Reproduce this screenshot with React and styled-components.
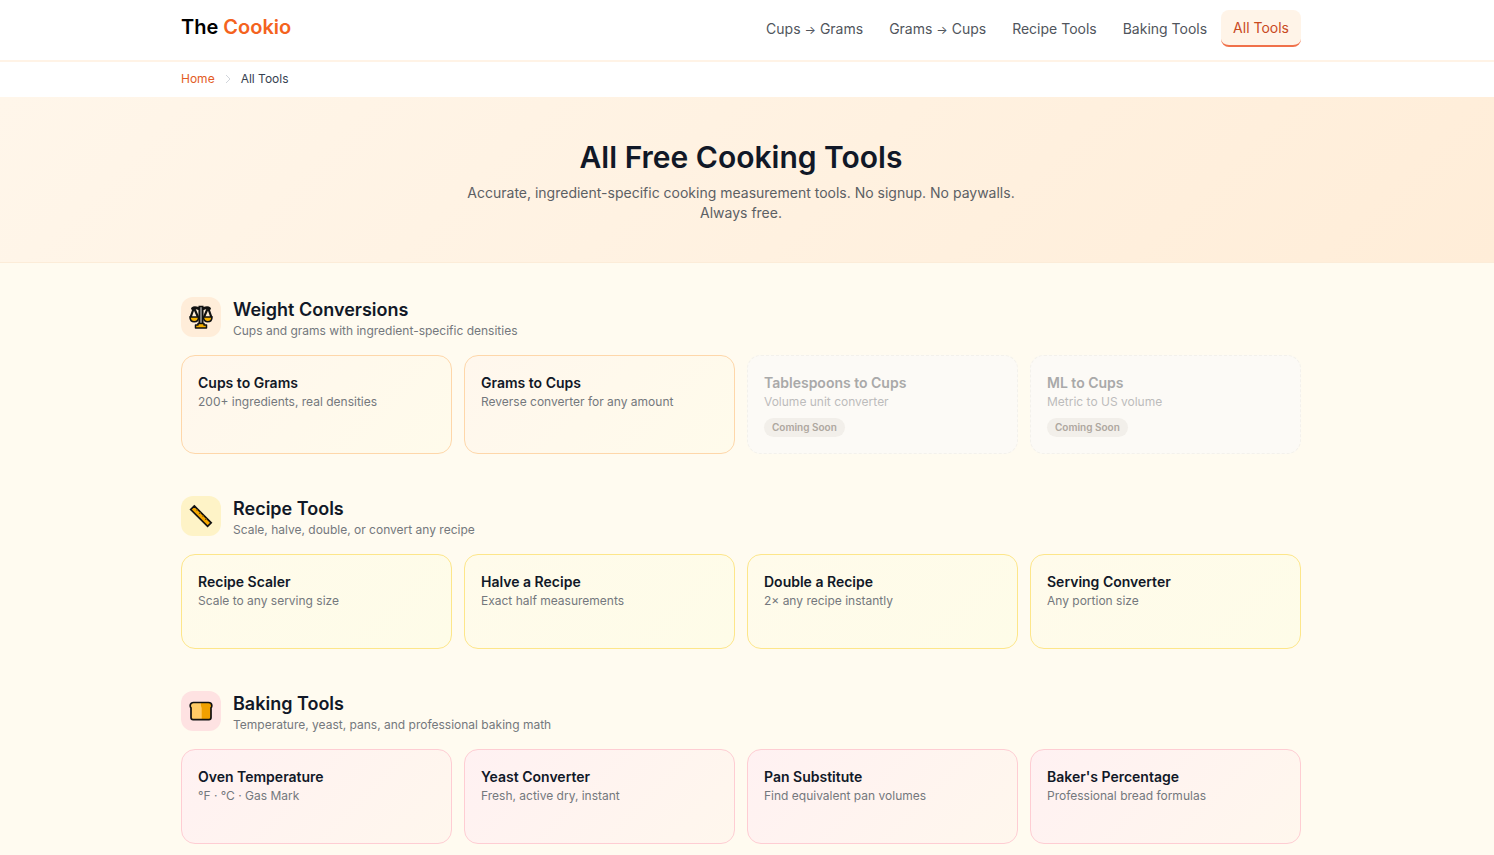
import styled, { createGlobalStyle } from "styled-components";

const navLinks = [
  { label: "Cups to Grams", from: "Cups", to: "Grams" },
  { label: "Grams to Cups", from: "Grams", to: "Cups" },
  { label: "Recipe Tools" },
  { label: "Baking Tools" },
  { label: "All Tools", active: true },
];

const sections = [
  {
    tone: "orange",
    icon: <ScalesIcon />,
    title: "Weight Conversions",
    text: "Cups and grams with ingredient-specific densities",
    tools: [
      { title: "Cups to Grams", text: "200+ ingredients, real densities" },
      { title: "Grams to Cups", text: "Reverse converter for any amount" },
      { title: "Tablespoons to Cups", text: "Volume unit converter", soon: true },
      { title: "ML to Cups", text: "Metric to US volume", soon: true },
    ],
  },
  {
    tone: "yellow",
    icon: <RulerIcon />,
    title: "Recipe Tools",
    text: "Scale, halve, double, or convert any recipe",
    tools: [
      { title: "Recipe Scaler", text: "Scale to any serving size" },
      { title: "Halve a Recipe", text: "Exact half measurements" },
      { title: "Double a Recipe", text: "2× any recipe instantly" },
      { title: "Serving Converter", text: "Any portion size" },
    ],
  },
  {
    tone: "rose",
    icon: <BreadIcon />,
    title: "Baking Tools",
    text: "Temperature, yeast, pans, and professional baking math",
    tools: [
      { title: "Oven Temperature", text: "°F · °C · Gas Mark" },
      { title: "Yeast Converter", text: "Fresh, active dry, instant" },
      { title: "Pan Substitute", text: "Find equivalent pan volumes" },
      { title: "Baker's Percentage", text: "Professional bread formulas" },
    ],
  },
];

const tones = {
  orange: {
    icon: "#ffedd9",
    border: "#fed7aa",
    card: "linear-gradient(135deg, #fff7ed, #fffbeb)",
  },
  yellow: {
    icon: "#fef3c7",
    border: "#fde68a",
    card: "linear-gradient(135deg, #fffbeb, #fefce8)",
  },
  rose: {
    icon: "#fee2e2",
    border: "#fecdd3",
    card: "linear-gradient(135deg, #fff1f2, #fff7ed)",
  },
};

function ScalesIcon() {
  return (
    <svg width="24" height="24" viewBox="0 0 24 24" aria-hidden="true">
      <path
        d="M3.500 3.500c2-1.800 4-.8 6 0h5c2-.8 4-1.800 6 0"
        stroke="#111"
        strokeWidth="2.800"
        strokeLinecap="round"
        fill="none"
      />
      <path
        d="M4.500 4 1.700 12M5.500 4l3.500 8M18.500 4 15 12M19.500 4l2.800 8"
        stroke="#111"
        strokeWidth="2.200"
        fill="none"
      />
      <path
        d="M1 12h8.600c0 3.200-2 4.800-4.300 4.800S1 15.200 1 12zM14.400 12H23c0 3.200-2 4.800-4.300 4.800s-4.300-1.600-4.300-4.800z"
        fill="#f5b000"
        stroke="#111"
        strokeWidth="1.600"
      />
      <path d="M10.300 1.500h3.400v18h-3.400z" fill="#8f8f8f" stroke="#111" strokeWidth="1.700" />
      <path
        d="M9 18.500h6v1.500h2.500v3h-11v-3H9z"
        fill="#f5b000"
        stroke="#111"
        strokeWidth="1.500"
        strokeLinejoin="round"
      />
    </svg>
  );
}

function RulerIcon() {
  return (
    <svg width="24" height="24" viewBox="0 0 24 24" aria-hidden="true">
      <path
        d="M5.300 1.900 22.200 18.800 18.600 22.400 1.700 5.500z"
        fill="#f7a900"
        stroke="#111"
        strokeWidth="1.700"
      />
      <path
        d="m8.700 5.300-1.200 1.200M11.700 8.300l-1.800 1.800M14.700 11.300l-1.200 1.200M17.700 14.300l-1.800 1.800"
        stroke="#6b4a00"
        strokeWidth="0.900"
      />
    </svg>
  );
}

function BreadIcon() {
  const crust =
    "M4.600 3.500h14.800c2 0 3.400 1.400 3.400 3.200 0 1-.3 1.700-.8 2.200v9.600c0 1.300-.8 2.100-2.100 2.100H4.100c-1.300 0-2.100-.8-2.100-2.100V8.900c-.5-.5-.8-1.200-.8-2.200 0-1.800 1.400-3.200 3.400-3.200z";

  return (
    <svg width="24" height="24" viewBox="0 0 24 24" aria-hidden="true">
      <path d={crust} fill="#ffcb66" />
      <path
        d="M12.500 3.500h6.900c2 0 3.400 1.400 3.400 3.200 0 1-.3 1.700-.8 2.200v9.600c0 1.300-.8 2.100-2.100 2.100h-7.200V8.900c-.8-1.700-1.300-3.700-.2-5.400z"
        fill="#f0a000"
      />
      <path d={crust} fill="none" stroke="#111" strokeWidth="1.700" />
    </svg>
  );
}

function App() {
  return (
    <>
      <GlobalStyle />
      <Header>
        <Container className="bar">
          <Logo href="#">
            The <span>Cookio</span>
          </Logo>
          <Nav>
            {navLinks.map((link) => (
              <NavLink key={link.label} href="#" $active={link.active}>
                {link.from ? (
                  <>
                    {link.from} <Arrow>→</Arrow> {link.to}
                  </>
                ) : (
                  link.label
                )}
              </NavLink>
            ))}
          </Nav>
        </Container>
      </Header>

      <Breadcrumb aria-label="Breadcrumb">
        <Container className="crumbs">
          <a href="#">Home</a>
          <svg width="6" height="10" viewBox="0 0 6 10" aria-hidden="true">
            <path d="m1 1 4 4-4 4" fill="none" stroke="#d1d5db" />
          </svg>
          <span>All Tools</span>
        </Container>
      </Breadcrumb>

      <Hero>
        <h1>All Free Cooking Tools</h1>
        <p>
          Accurate, ingredient-specific cooking measurement tools. No signup. No
          paywalls. Always free.
        </p>
      </Hero>

      <Main>
        {sections.map((section) => (
          <Section key={section.title}>
            <SectionHead>
              <IconBox $tone={section.tone}>{section.icon}</IconBox>
              <SectionText>
                <h2>{section.title}</h2>
                <p>{section.text}</p>
              </SectionText>
            </SectionHead>
            <Grid>
              {section.tools.map((tool) =>
                tool.soon ? (
                  <Card as="div" key={tool.title} $tone={section.tone} $soon>
                    <h3>{tool.title}</h3>
                    <p>{tool.text}</p>
                    <Badge>Coming Soon</Badge>
                  </Card>
                ) : (
                  <Card href="#" key={tool.title} $tone={section.tone}>
                    <h3>{tool.title}</h3>
                    <p>{tool.text}</p>
                  </Card>
                )
              )}
            </Grid>
          </Section>
        ))}
      </Main>
    </>
  );
}

export default App;

const GlobalStyle = createGlobalStyle`
  * {
    box-sizing: border-box;
    margin: 0;
    padding: 0;
  }
  body {
    background: #fffbf0;
    color: #111827;
    font-family: Inter, "Open Sans", sans-serif;
  }
  a {
    text-decoration: none;
  }
`;

const Container = styled.div`
  max-width: 1120px;
  margin: 0 auto;

  &.bar {
    display: flex;
    justify-content: space-between;
    align-items: flex-start;
  }
  &.crumbs {
    display: flex;
    align-items: center;
    gap: 10px;
  }
`;

const Header = styled.header`
  background: #fff;
  border-bottom: 2px solid #fff3e6;
  padding: 10px 24px 13px 12px;
`;

const Logo = styled.a`
  font-size: 20px;
  font-weight: 600;
  line-height: 34px;
  color: #000;

  span {
    color: #f4631e;
  }
`;

const Nav = styled.nav`
  display: flex;
  align-items: center;
  gap: 2px;
`;

const NavLink = styled.a`
  padding: 9px 12px 8px;
  border-radius: 8px;
  border-bottom: ${(p) => (p.$active ? "2px solid #f0714a" : "none")};
  background: ${(p) => (p.$active ? "#fff4e8" : "transparent")};
  color: ${(p) => (p.$active ? "#c94a1e" : "#50555c")};
  font-size: 14px;
  font-weight: 400;
  line-height: 18px;
`;

const Arrow = styled.span`
  font-size: 12px;
  line-height: 1;
`;

const Breadcrumb = styled.nav`
  background: #fff;
  padding: 8px 24px 9px 12px;
  font-size: 12px;
  line-height: 18px;

  a {
    color: #e35b25;
  }
  span {
    color: #374151;
  }
`;

const Hero = styled.section`
  padding: 40px 24px 39px 12px;
  border-bottom: 1px solid #fcecd8;
  background: linear-gradient(135deg, #fff6ea 0%, #ffedd8 100%);
  text-align: center;

  h1 {
    font-size: 30px;
    font-weight: 600;
    line-height: 40px;
    color: #111827;
  }
  p {
    max-width: 560px;
    margin: 6px auto 0;
    font-size: 14px;
    line-height: 20px;
    color: #5c6064;
  }
`;

const Main = styled.main`
  max-width: 1156px;
  padding: 34px 24px 11px 12px;
  margin: 0 auto;
`;

const Section = styled.section`
  & + & {
    margin-top: 42px;
  }
`;

const SectionHead = styled.div`
  display: flex;
  align-items: center;
  gap: 12px;
  height: 40px;
  margin-bottom: 18px;
`;

const SectionText = styled.div`
  padding-top: 4px;

  h2 {
    font-size: 18px;
    font-weight: 600;
    line-height: 24px;
  }
  p {
    font-size: 12px;
    line-height: 18px;
    color: #74787d;
  }
`;

const IconBox = styled.div`
  display: flex;
  align-items: center;
  justify-content: center;
  width: 40px;
  height: 40px;
  border-radius: 12px;
  background: ${(p) => tones[p.$tone].icon};
`;

const Grid = styled.div`
  display: grid;
  grid-template-columns: repeat(4, 1fr);
  gap: 12px;
`;

const Card = styled.a`
  min-height: 95px;
  padding: 16px;
  border: 1px ${(p) => (p.$soon ? "dashed #f3f1ec" : `solid ${tones[p.$tone].border}`)};
  border-radius: 14px;
  background: ${(p) => (p.$soon ? "#fcfaf6" : tones[p.$tone].card)};

  h3 {
    font-size: 14px;
    font-weight: 600;
    line-height: 22px;
    color: ${(p) => (p.$soon ? "#a9a9a9" : "#111827")};
  }
  p {
    font-size: 12px;
    line-height: 16px;
    color: ${(p) => (p.$soon ? "#bcbcbc" : "#74787d")};
  }
`;

const Badge = styled.span`
  display: block;
  width: fit-content;
  margin-top: 8px;
  padding: 0 8px;
  border-radius: 10px;
  background: #f2efea;
  color: #aea79f;
  font-size: 10px;
  font-weight: 600;
  line-height: 19px;
`;
